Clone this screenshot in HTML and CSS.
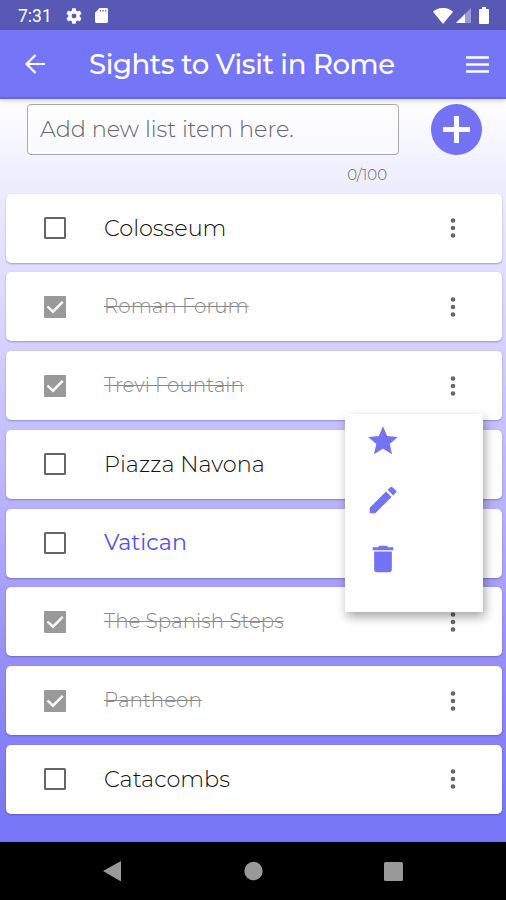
FILE: index.html
```html
<!DOCTYPE html>
<html lang="en">
<head>
<meta charset="utf-8">
<title>Sights to Visit in Rome</title>
<link rel="stylesheet" href="styles.css">
</head>
<body>
<svg class="defs" aria-hidden="true">
  <symbol id="open" viewBox="0 0 22 22"><rect x="1" y="1" width="20" height="20" rx=".5" fill="none" stroke="currentColor" stroke-width="2"/></symbol>
  <symbol id="done" viewBox="0 0 22 22"><rect width="22" height="22" rx="1"/><path d="M3.500 10.500l5.500 5.200L18.700 5.800" fill="none" stroke="#fff" stroke-width="2.400"/></symbol>
  <symbol id="dots" viewBox="0 0 6 20"><circle cx="3" cy="2.500" r="2.300"/><circle cx="3" cy="10" r="2.300"/><circle cx="3" cy="17.500" r="2.300"/></symbol>
</svg>
<div class="status">
  <span class="clock">7:31</span>
  <svg class="gear" viewBox="2 2 20 20"><path d="M19.140 12.940c.04-.3.060-.61.060-.94 0-.32-.02-.64-.07-.94l2.030-1.580c.18-.14.230-.41.120-.61l-1.920-3.320c-.12-.22-.37-.29-.59-.22l-2.390.960c-.5-.38-1.030-.7-1.620-.94l-.36-2.540c-.04-.24-.24-.41-.48-.41h-3.840c-.24 0-.43.170-.47.410l-.36 2.540c-.59.240-1.130.570-1.620.940l-2.390-.96c-.22-.08-.47 0-.59.220L2.740 8.870c-.12.210-.08.470.120.610l2.030 1.580c-.05.300-.09.630-.09.940s.02.640.070.940l-2.030 1.580c-.18.140-.23.410-.12.610l1.920 3.320c.12.220.370.290.590.220l2.390-.96c.5.380 1.030.700 1.620.940l.36 2.540c.05.240.240.410.480.410h3.840c.24 0 .44-.17.470-.41l.36-2.540c.59-.24 1.130-.56 1.620-.94l2.390.960c.22.080.470 0 .59-.22l1.920-3.320c.12-.22.070-.47-.12-.61l-2.010-1.580zM12 15a3 3 0 1 1 0-6 3 3 0 0 1 0 6z"/></svg>
  <svg class="card-icon" viewBox="0 0 14 16"><path fill-rule="evenodd" d="M5 0h7.500Q14 0 14 1.500v13Q14 16 12.500 16h-11Q0 16 0 14.500V5zM5.200 2v1.600h1.300V2zm2.800 0v1.600h1.300V2zm2.800 0v1.600h1.300V2z"/></svg>
  <svg class="wifi" viewBox="0 0 20 16"><path d="M0 3.800C5.500-1.300 14.500-1.300 20 3.800L10 16z"/></svg>
  <svg class="signal" viewBox="0 0 15 15"><path opacity=".4" d="M15 0v15H0z"/><path d="M9 6v9H0z"/></svg>
  <svg class="battery" viewBox="0 0 10 17"><path d="M3 0h4v2h2q1 0 1 1v13q0 1-1 1H1q-1 0-1-1V3q0-1 1-1h2z"/></svg>
</div>
<header class="bar">
  <svg class="back" viewBox="0 0 20 20"><path d="M20 10H1.500M10.500 1l-9 9 9 9" fill="none" stroke="#fff" stroke-width="2.200"/></svg>
  <h1 class="title">Sights to Visit in Rome</h1>
  <svg class="burger" viewBox="0 0 23 17"><path d="M0 1.500h23M0 8.500h23M0 15.500h23" stroke="#fff" stroke-width="2.600"/></svg>
</header>
<main class="page">
  <div class="entry">
    <div class="field">Add new list item here.</div>
    <div class="add"><svg viewBox="0 0 27 27"><path d="M13.500 0v27M0 13.500h27" stroke="#fff" stroke-width="5"/></svg></div>
  </div>
  <div class="count">0/100</div>
  <ul class="list">
    <li class="item"><svg class="check"><use href="#open"/></svg><span class="label">Colosseum</span><svg class="more"><use href="#dots"/></svg></li>
    <li class="item done"><svg class="check"><use href="#done"/></svg><span class="label">Roman Forum</span><svg class="more"><use href="#dots"/></svg></li>
    <li class="item done"><svg class="check"><use href="#done"/></svg><span class="label">Trevi Fountain</span><svg class="more"><use href="#dots"/></svg>
      <div class="menu">
        <svg viewBox="0 0 24 24"><path d="M12 17.270L18.180 21l-1.640-7.030L22 9.240l-7.190-.61L12 2 9.190 8.630 2 9.240l5.460 4.730L5.820 21z"/></svg>
        <svg viewBox="0 0 24 24"><path d="M3 17.250V21h3.750L17.810 9.940l-3.750-3.750zM20.710 7.040a1 1 0 0 0 0-1.410l-2.340-2.340a1 1 0 0 0-1.410 0l-1.830 1.830 3.750 3.750z"/></svg>
        <svg viewBox="0 0 24 24"><path d="M6 19a2 2 0 0 0 2 2h8a2 2 0 0 0 2-2V7H6zM19 4h-3.500l-1-1h-5l-1 1H5v2h14z"/></svg>
      </div>
    </li>
    <li class="item"><svg class="check"><use href="#open"/></svg><span class="label">Piazza Navona</span><svg class="more"><use href="#dots"/></svg></li>
    <li class="item starred"><svg class="check"><use href="#open"/></svg><span class="label">Vatican</span><svg class="more"><use href="#dots"/></svg></li>
    <li class="item done"><svg class="check"><use href="#done"/></svg><span class="label">The Spanish Steps</span><svg class="more"><use href="#dots"/></svg></li>
    <li class="item done"><svg class="check"><use href="#done"/></svg><span class="label">Pantheon</span><svg class="more"><use href="#dots"/></svg></li>
    <li class="item"><svg class="check"><use href="#open"/></svg><span class="label">Catacombs</span><svg class="more"><use href="#dots"/></svg></li>
  </ul>
</main>
<nav class="nav">
  <svg viewBox="0 0 20 20"><path d="M0 10L18 0v20.500z"/></svg>
  <svg viewBox="0 0 20 20"><circle cx="10.500" cy="10" r="9.200"/></svg>
  <svg viewBox="0 0 20 20"><rect x="1" y="1" width="19" height="19" rx="1.500"/></svg>
</nav>
</body>
</html>
```
FILE: styles.css
```css
* { box-sizing: border-box; }
body { margin: 0; width: 506px; height: 900px; display: flex; flex-direction: column; overflow: hidden; font-family: Montserrat, Inter, sans-serif; }
svg { display: block; flex: none; fill: currentColor; }
.defs { display: none; }
.status { height: 30px; flex: none; display: flex; align-items: center; padding: 1px 17px 0 18px; background: #5858b5; color: #fff; }
.clock { font: 400 17.500px Roboto, sans-serif; width: 48px; }
.gear { width: 16px; height: 16px; }
.card-icon { width: 13px; height: 15px; margin-left: 13px; }
.wifi { width: 20px; height: 16px; margin-left: auto; }
.signal { width: 15px; height: 15px; margin-left: 3px; }
.battery { width: 10px; height: 17px; margin-left: 8px; }
.bar { position: relative; height: 69px; flex: none; display: flex; align-items: center; padding: 0 17px 0 25px; background: #7575f7; border-bottom: 2px solid #6565f0; box-shadow: 0 2px 5px rgba(70, 70, 50, .25); color: #fff; }
.back { width: 20px; height: 20px; margin-top: 1px; }
.title { margin: 0 auto 0 44px; font-size: 27.500px; line-height: 36px; font-weight: 500; white-space: nowrap; letter-spacing: -.4px; }
.burger { width: 23px; height: 17px; margin-top: 1px; }
.page { height: 743px; flex: none; padding: 5px 4px 0 5px; background: linear-gradient(#fff 0, #efeffd 10%, #d5d2fd 32%, #b4affa 57%, #9992f6 73%, #7c79f6 94%, #7575f7 100%); }
.entry { display: flex; align-items: center; justify-content: space-between; padding: 0 20px 0 22px; }
.field { width: 372px; height: 51px; padding-left: 12px; border: 1.500px solid #aaa9b0; border-radius: 4px; background: rgba(255, 255, 255, .5); font-size: 22.400px; line-height: 49px; font-weight: 300; color: #666; white-space: nowrap; }
.add { width: 51px; height: 51px; display: grid; place-items: center; border-radius: 50%; background: #7472f5; }
.add svg { width: 27px; height: 27px; }
.count { height: 38.600px; padding: 10px 115px 0 0; text-align: right; font-size: 15px; line-height: 20px; font-weight: 300; color: #666; }
.list { margin: 0; padding: 0 0 0 .5px; display: grid; gap: 9.750px; list-style: none; }
.item { position: relative; height: 69px; display: flex; align-items: center; padding: 0 46.500px 0 38.100px; border-radius: 5px; background: #fff; box-shadow: 0 1px 2px rgba(40, 35, 100, .35); color: #111; }
.check { width: 22px; height: 22px; margin-right: 38.400px; color: #666; }
.done .check { color: #999; }
.label { margin-right: auto; font-size: 22.400px; line-height: 30px; font-weight: 300; white-space: nowrap; }
.done .label { margin-top: -1px; font-size: 19.900px; color: #888; text-decoration: line-through; text-decoration-thickness: 1px; }
.starred .label { color: #5552df; font-weight: 400; font-size: 22.200px; }
.more { width: 6px; height: 20px; color: #666; }
.menu { position: absolute; z-index: 2; top: 63px; right: 19.500px; width: 137.500px; height: 198px; padding: 12px 0 0 23px; display: grid; align-content: start; gap: 29px; background: #fff; box-shadow: 2px 5px 10px rgba(0, 0, 0, .35); color: #7472f5; }
.menu svg { width: 30px; height: 30px; transform: scale(1.180); }
.nav { height: 58px; flex: none; display: flex; justify-content: space-between; padding: 19px 103px 0; background: #000; color: #999; }
.nav svg { width: 20px; height: 20px; }
```
